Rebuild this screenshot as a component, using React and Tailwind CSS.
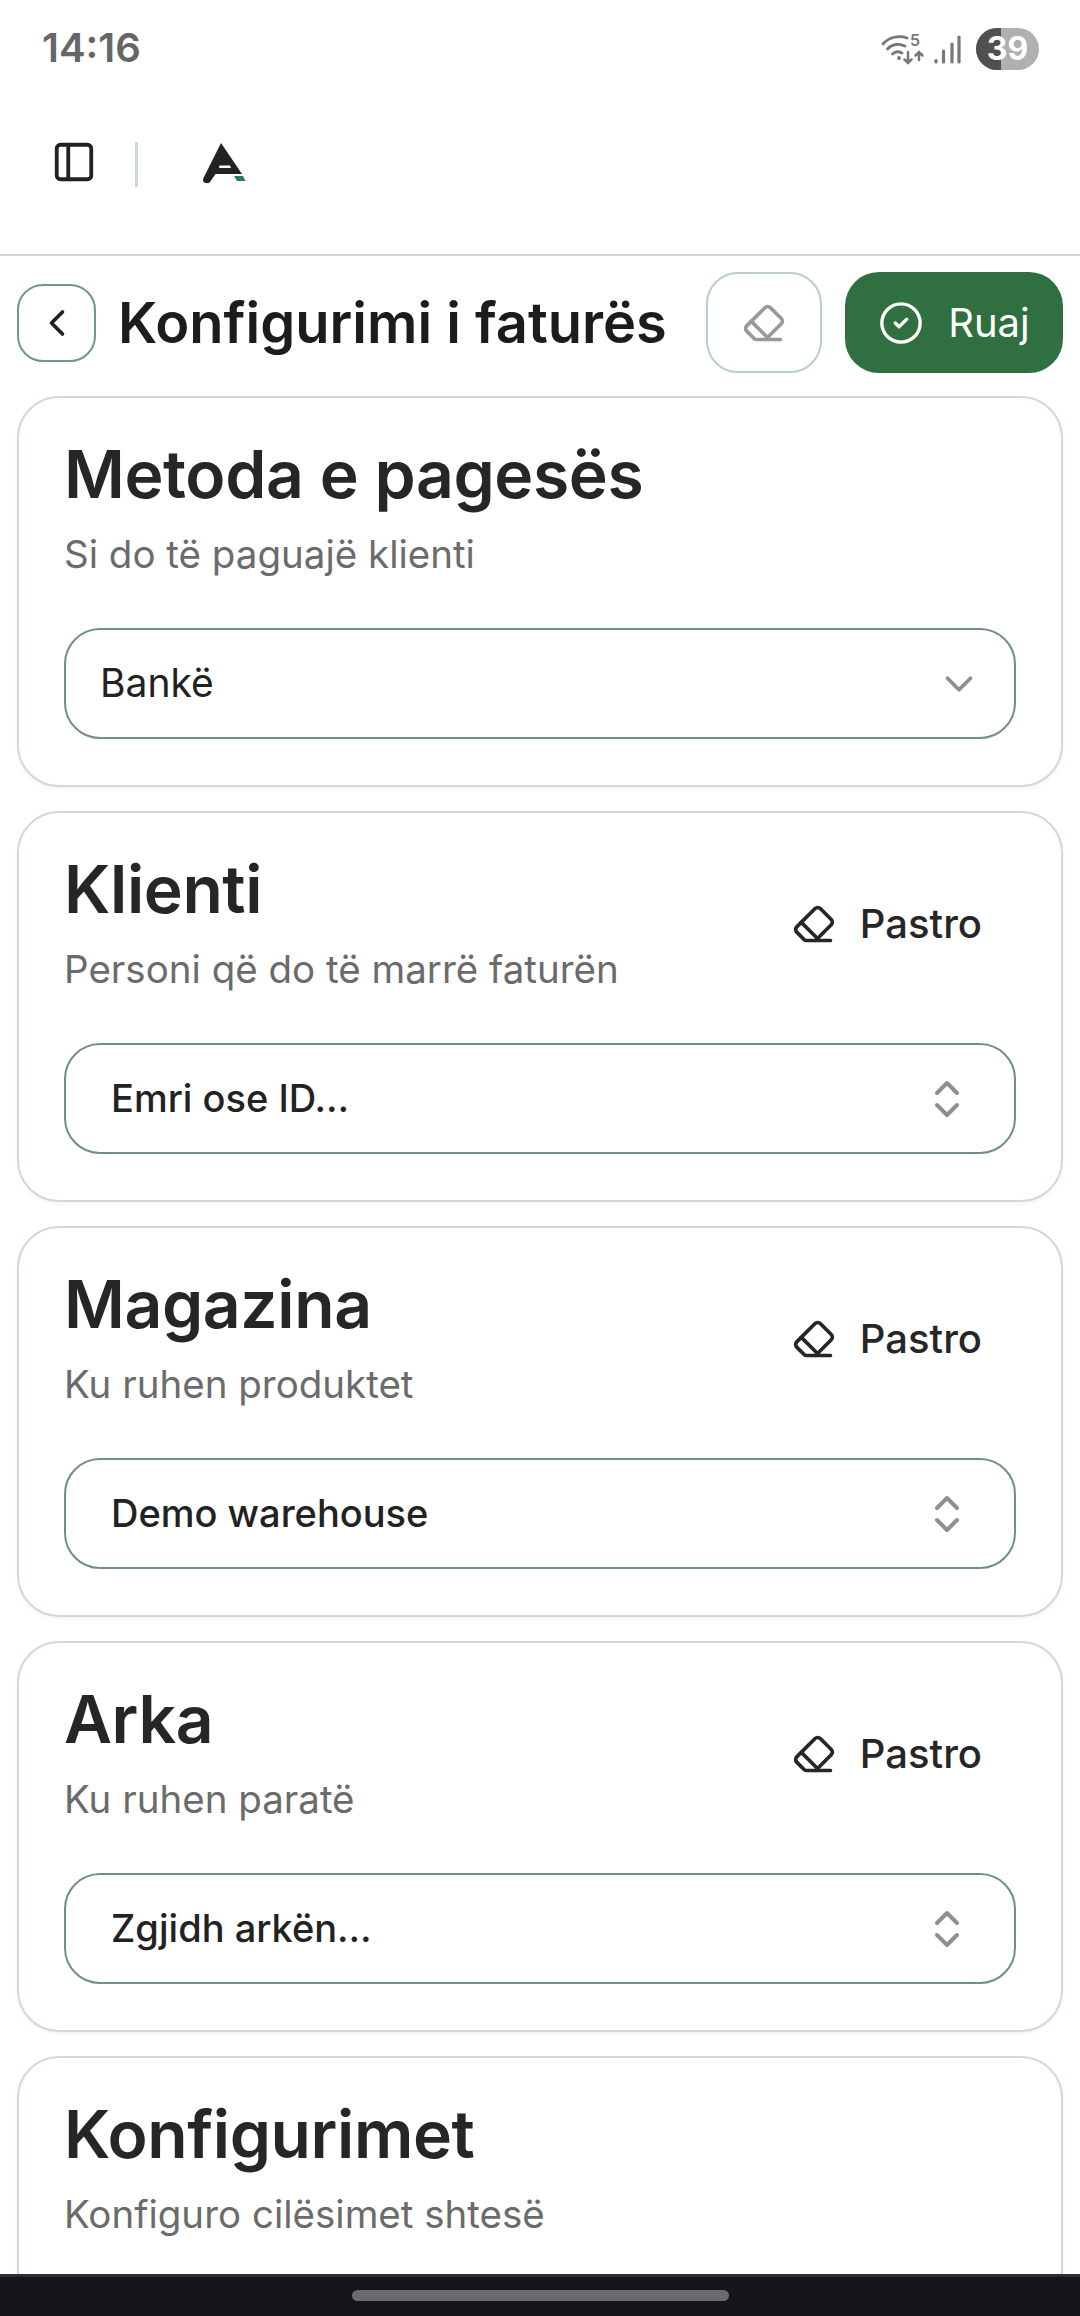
import { ChevronDown, ChevronLeft, ChevronsUpDown, CircleCheck, Eraser, PanelLeft } from "lucide-react";

const font = { fontFamily: "Inter, 'Liberation Sans', sans-serif" };

function WifiIcon() {
  return (
    <svg width="46" height="36" viewBox="0 0 46 36" fill="none" stroke="#777" strokeLinecap="round">
      <path d="M3 13C9 6 19 4 27 7" strokeWidth="2.8" />
      <path d="M7.500 18C12 13 19 12 25 15" strokeWidth="2.8" />
      <path d="M12.500 23C15 20.500 19 20.500 22 22" strokeWidth="2.8" />
      <circle cx="19" cy="27" r="1.9" fill="#777" stroke="none" />
      <path d="M28 21V32M24.500 28.500L28 32L31.500 28.500" strokeWidth="2.500" />
      <path d="M39 29V21M35.500 24.500L39 21L42.500 24.500" strokeWidth="2.500" />
      <text x="30" y="15" fontSize="16" fontWeight="600" fill="#777" stroke="none" fontFamily="Inter, sans-serif">5</text>
    </svg>
  );
}

function SignalIcon() {
  return (
    <svg width="29" height="32" viewBox="0 0 29 32" fill="none" stroke="#777" strokeWidth="3.200" strokeLinecap="round">
      <path d="M3 29V27.500" />
      <path d="M10.500 29V18" />
      <path d="M19 29V11" />
      <path d="M26 29V4" />
    </svg>
  );
}

function Battery() {
  return (
    <div className="relative flex h-[42px] w-[63px] items-center justify-center overflow-hidden rounded-full bg-[#b0b0b0]">
      <div className="absolute inset-y-0 left-0 w-[25px] bg-[#505050]" />
      <span className="relative text-[32px] font-bold leading-none text-white">39</span>
    </div>
  );
}

function Logo() {
  return (
    <svg width="46" height="44" viewBox="0 0 46 44">
      <path d="M20 1L41 32H14.500L9 40C7.500 41.500 5 41.500 3.500 40.500C2 39.500 1.500 38 2.500 36Z" fill="#222" />
      <path d="M19 23.500H29L30 26H19C17.500 26 17.500 23.500 19 23.500Z" fill="#fff" />
      <path d="M33 34H42L44.500 39H36Z" fill="#2a7d4f" />
    </svg>
  );
}

function Select({ label, clean }) {
  return (
    <div className={`flex h-[111px] items-center justify-between rounded-[36px] border-2 border-[#6f9279] ${clean ? "pl-[45px] pr-[43px]" : "pl-[34px] pr-[32px]"}`}>
      <span className={`text-[#222] ${clean ? "text-[38px] font-medium" : "text-[39px]"}`}>{label}</span>
      {clean ? (
        <ChevronsUpDown size={48} strokeWidth={2} className="text-[#8f8f8f]" />
      ) : (
        <ChevronDown size={46} strokeWidth={2} className="text-[#8f8f8f]" />
      )}
    </div>
  );
}

function Card({ title, subtitle, value, clean, children }) {
  return (
    <section className="rounded-[42px] border-2 border-[#cddcd3] bg-white px-[45px] pb-[46px] pt-[36px] shadow-[0_2px_4px_rgba(0,0,0,0.05)]">
      <div className="flex items-center justify-between">
        <div>
          <h2 className="text-[66px] font-semibold leading-[80px] tracking-[-0.4px] text-[#262626]">{title}</h2>
          <p className="mt-[16px] text-[38.500px] leading-[48px] text-[#6b6b6b]">{subtitle}</p>
        </div>
        {clean && (
          <button className="mr-[34px] mt-[6px] flex items-center gap-[24px] text-[40px] font-medium text-[#262626]">
            <Eraser size={44} strokeWidth={2} />
            Pastro
          </button>
        )}
      </div>
      {value && (
        <div className="mt-[50px]">
          <Select label={value} clean={clean} />
        </div>
      )}
      {children}
    </section>
  );
}

export default function App() {
  return (
    <div className="flex h-[2316px] w-[1080px] flex-col overflow-hidden bg-white" style={font}>
      <div className="flex h-[98px] shrink-0 items-center justify-between pl-[42px] pr-[41px]">
        <span className="mb-[2px] text-[40px] font-semibold text-[#666]">14:16</span>
        <div className="flex items-center">
          <WifiIcon />
          <div className="ml-[7px]">
            <SignalIcon />
          </div>
          <div className="ml-[14px]">
            <Battery />
          </div>
        </div>
      </div>

      <header className="flex h-[158px] shrink-0 items-start border-b-2 border-[#cbdad3] pl-[51px] pt-[41px]">
        <PanelLeft size={46} strokeWidth={2} className="text-[#222]" />
        <div className="ml-[38px] mt-[3px] h-[45px] w-[3px] bg-[#c9dbd2]" />
        <div className="ml-[63px] mt-[3px]">
          <Logo />
        </div>
      </header>

      <div className="flex min-h-0 flex-1 flex-col gap-[24px] overflow-hidden px-[17px] pb-0">
        <div className="-mb-[24px] flex h-[140px] shrink-0 items-start pt-[16px]">
          <div className="flex h-[101px] items-center">
            <button className="flex h-[78px] w-[79px] items-center justify-center rounded-[26px] border-2 border-[#6f9a7c] text-[#222]">
              <ChevronLeft size={44} strokeWidth={2} />
            </button>
          </div>
          <h1 className="ml-[22px] flex h-[101px] flex-1 items-center text-[56px] font-semibold text-[#1c1c1c]">Konfigurimi i faturës</h1>
          <button className="flex h-[101px] w-[116px] items-center justify-center rounded-[32px] border-2 border-[#b9d0c3] text-[#999]">
            <Eraser size={44} strokeWidth={2} />
          </button>
          <button className="ml-[23px] flex h-[101px] w-[218px] items-center justify-center gap-[24px] rounded-[34px] bg-[#2f6f40] text-[40px] text-white">
            <CircleCheck size={46} strokeWidth={1.75} />
            Ruaj
          </button>
        </div>

        <Card title="Metoda e pagesës" subtitle="Si do të paguajë klienti" value="Bankë" />
        <Card title="Klienti" subtitle="Personi që do të marrë faturën" value="Emri ose ID…" clean />
        <Card title="Magazina" subtitle="Ku ruhen produktet" value="Demo warehouse" clean />
        <Card title="Arka" subtitle="Ku ruhen paratë" value="Zgjidh arkën…" clean />
        <Card title="Konfigurimet" subtitle="Konfiguro cilësimet shtesë">
          <div className="h-[200px]" />
        </Card>
      </div>

      <nav className="flex h-[42px] shrink-0 justify-center border-t-[3px] border-[#2c2e33] bg-[#14161b] pt-[13px]">
        <div className="h-[11px] w-[377px] rounded-full bg-[#6b6b6d]" />
      </nav>
    </div>
  );
}
